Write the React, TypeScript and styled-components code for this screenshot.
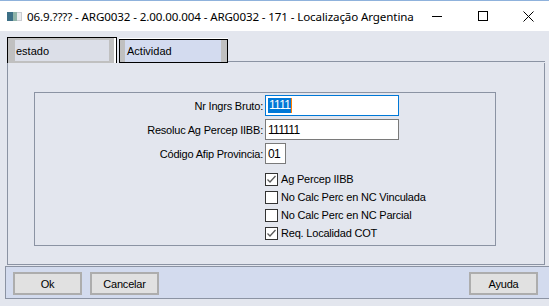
import styled, { createGlobalStyle } from 'styled-components';

const GlobalStyle = createGlobalStyle`
	html, body {
		margin: 0;
		padding: 0;
		background: #f0f0f0;
	}
	* {
		box-sizing: border-box;
	}
`;

const fields = [
	{ label: 'Nr Ingrs Bruto:', value: '1111', width: 134, focused: true },
	{ label: 'Resoluc Ag Percep IIBB:', value: '111111', width: 134, focused: false },
	{ label: 'Código Afip Provincia:', value: '01', width: 21, focused: false },
];

const checks = [
	{ label: 'Ag Percep IIBB', checked: true },
	{ label: 'No Calc Perc en NC Vinculada', checked: false },
	{ label: 'No Calc Perc en NC Parcial', checked: false },
	{ label: 'Req. Localidad COT', checked: true },
];

const App = () => {
	return (
		<>
			<GlobalStyle />
			<Window>
				<TitleBar>
					<AppIcon width='15' height='9' viewBox='0 0 15 9'>
						<rect x='0' y='0' width='15' height='9' fill='#c9ccd2' />
						<rect x='0' y='0' width='6' height='9' fill='#3c6f86' />
						<rect x='6' y='0' width='4' height='9' fill='#8fb3a8' />
						<rect x='10' y='1' width='4' height='7' fill='#e9ebee' />
					</AppIcon>
					<TitleText>06.9.???? - ARG0032 - 2.00.00.004 - ARG0032 - 171 - Localização Argentina</TitleText>
					<Controls>
						<ControlButton>
							<svg width='10' height='10' viewBox='0 0 10 10'>
								<line x1='0' y1='5.5' x2='10' y2='5.5' stroke='#000' strokeWidth='1' />
							</svg>
						</ControlButton>
						<ControlButton>
							<svg width='10' height='10' viewBox='0 0 10 10'>
								<rect x='0.5' y='0.5' width='9' height='9' fill='none' stroke='#000' strokeWidth='1' />
							</svg>
						</ControlButton>
						<ControlButton>
							<svg width='11' height='11' viewBox='0 0 11 11'>
								<path d='M0.5 0.5 L10.5 10.5 M10.5 0.5 L0.5 10.5' stroke='#000' strokeWidth='1' />
							</svg>
						</ControlButton>
					</Controls>
				</TitleBar>
				<Body>
					<TabStrip>
						<ActiveTab>
							<ActiveFace>estado</ActiveFace>
						</ActiveTab>
						<Tab>
							<TabFace>Actividad</TabFace>
						</Tab>
						<TabFiller />
					</TabStrip>
					<TabPanel>
						<Group>
							<FieldGrid>
								{fields.map((f) => (
									<FieldRow key={f.label}>
										<Label>{f.label}</Label>
										<Input width={f.width} focused={f.focused}>
											{f.focused ? (
												<>
													<Selected>{f.value}</Selected>
													<Caret />
												</>
											) : (
												f.value
											)}
										</Input>
									</FieldRow>
								))}
							</FieldGrid>
							<CheckList>
								{checks.map((c) => (
									<CheckRow key={c.label}>
										<Box>
											{c.checked && (
												<svg width='11' height='11' viewBox='0 0 11 11'>
													<path d='M1.5 5.5 L4 8 L9.5 2' fill='none' stroke='#5a5a5a' strokeWidth='1.3' />
												</svg>
											)}
										</Box>
										<CheckText>{c.label}</CheckText>
									</CheckRow>
								))}
							</CheckList>
						</Group>
					</TabPanel>
					<ButtonBar>
						<Button>Ok</Button>
						<Button>Cancelar</Button>
						<Spacer />
						<Button>Ayuda</Button>
					</ButtonBar>
				</Body>
			</Window>
		</>
	);
};

export default App;

const Window = styled.div`
	width: 549px;
	height: 306px;
	display: flex;
	flex-direction: column;
	background: #f0f0f0;
	overflow: hidden;
	font-family: 'Liberation Sans', Arial, sans-serif;
`;

const TitleBar = styled.div`
	height: 31px;
	flex-shrink: 0;
	display: flex;
	align-items: center;
	background: #ffffff;
	border-top: 1px solid #8fb2dc;
	padding-left: 7px;
`;

const AppIcon = styled.svg`
	margin-top: 1px;
	flex-shrink: 0;
`;

const TitleText = styled.div`
	margin-left: 5px;
	font-family: 'Noto Sans', 'Open Sans', sans-serif;
	font-size: 11.6px;
	letter-spacing: -0.12px;
	color: #000;
	white-space: nowrap;
`;

const Controls = styled.div`
	margin-left: auto;
	display: flex;
	height: 100%;
`;

const ControlButton = styled.div`
	width: 46px;
	height: 100%;
	display: flex;
	align-items: center;
	justify-content: center;
`;

const Body = styled.div`
	flex: 1;
	display: flex;
	flex-direction: column;
	background: #e3e6ee;
`;

const TabStrip = styled.div`
	height: 32px;
	display: flex;
	align-items: flex-end;
	padding-left: 7px;
	padding-right: 4px;
`;

const ActiveTab = styled.div`
	width: 110px;
	height: 26px;
	border: 1px solid #000;
	border-bottom: 0;
	padding-right: 2px;
	background: #fff;
`;

const ActiveFace = styled.div`
	height: 100%;
	display: flex;
	align-items: center;
	border-style: solid;
	border-color: #c0c0c0;
	border-width: 2px 5px 2px 7px;
	background: #dcdfe8;
	padding-left: 1px;
	font-size: 11px;
	color: #000;
`;

const Tab = styled.div`
	width: 109px;
	height: 24px;
	margin-left: 2px;
	border: 1px solid #000;
	box-shadow: 0 -1px 0 #ffffff;
`;

const TabFace = styled.div`
	height: 100%;
	display: flex;
	align-items: center;
	border-style: solid;
	border-color: #c0c0c0;
	border-width: 0 6px 0 5px;
	background: #d3dbef;
	padding-left: 2px;
	font-size: 11px;
	color: #000;
`;

const TabFiller = styled.div`
	flex: 1;
	height: 0;
	margin-bottom: 1px;
	border-bottom: 1px solid #8b93a3;
	box-sizing: content-box;
`;

const TabPanel = styled.div`
	height: 202px;
	margin: 0 4px 0 7px;
	border: 1px solid #8b93a3;
	border-top: 0;
	padding: 29px 0 0 26px;
`;

const Group = styled.div`
	width: 462px;
	height: 154px;
	border: 1px solid #8b93a3;
	padding-top: 2px;
`;

const FieldGrid = styled.div`
	display: flex;
	flex-direction: column;
	gap: 3px;
`;

const FieldRow = styled.div`
	display: grid;
	grid-template-columns: 228px auto;
	column-gap: 2px;
	align-items: center;
	height: 21px;
`;

const Label = styled.div`
	text-align: right;
	font-size: 11px;
	letter-spacing: -0.2px;
	color: #000;
	white-space: nowrap;
`;

const Input = styled.div<{ width: number; focused: boolean }>`
	width: ${(p) => p.width}px;
	height: 21px;
	background: #fff;
	border: 1px solid ${(p) => (p.focused ? '#0078d7' : '#7a7a7a')};
	display: flex;
	align-items: center;
	padding-left: 2px;
	font-size: 12px;
	letter-spacing: -0.7px;
	color: #000;
`;

const Selected = styled.span`
	background: #0078d7;
	color: #fff;
	line-height: 15px;
	padding: 0 1px 0 1px;
`;

const Caret = styled.span`
	width: 1px;
	height: 15px;
	background: #ff7f00;
`;

const CheckList = styled.div`
	margin: 6px 0 0 230px;
	display: flex;
	flex-direction: column;
`;

const CheckRow = styled.div`
	height: 18px;
	display: flex;
	align-items: center;
`;

const Box = styled.div`
	width: 13px;
	height: 13px;
	border: 1px solid #333;
	background: #fff;
	display: flex;
	align-items: center;
	justify-content: center;
`;

const CheckText = styled.div`
	margin-left: 3px;
	font-size: 11px;
	letter-spacing: -0.2px;
	color: #000;
	white-space: nowrap;
`;

const ButtonBar = styled.div`
	height: 33px;
	margin: 1px 0 0 5px;
	border: 1px solid #8b93a3;
	border-right: 0;
	background: #d3dbee;
	display: flex;
	align-items: flex-start;
	gap: 8px;
	padding: 5px 11px 0 7px;
`;

const Spacer = styled.div`
	flex: 1;
`;

const Button = styled.div`
	width: 69px;
	height: 23px;
	border: 2px solid #adadad;
	background: #e1e1e1;
	display: flex;
	align-items: center;
	justify-content: center;
	font-size: 11px;
	letter-spacing: -0.2px;
	color: #000;
`;
